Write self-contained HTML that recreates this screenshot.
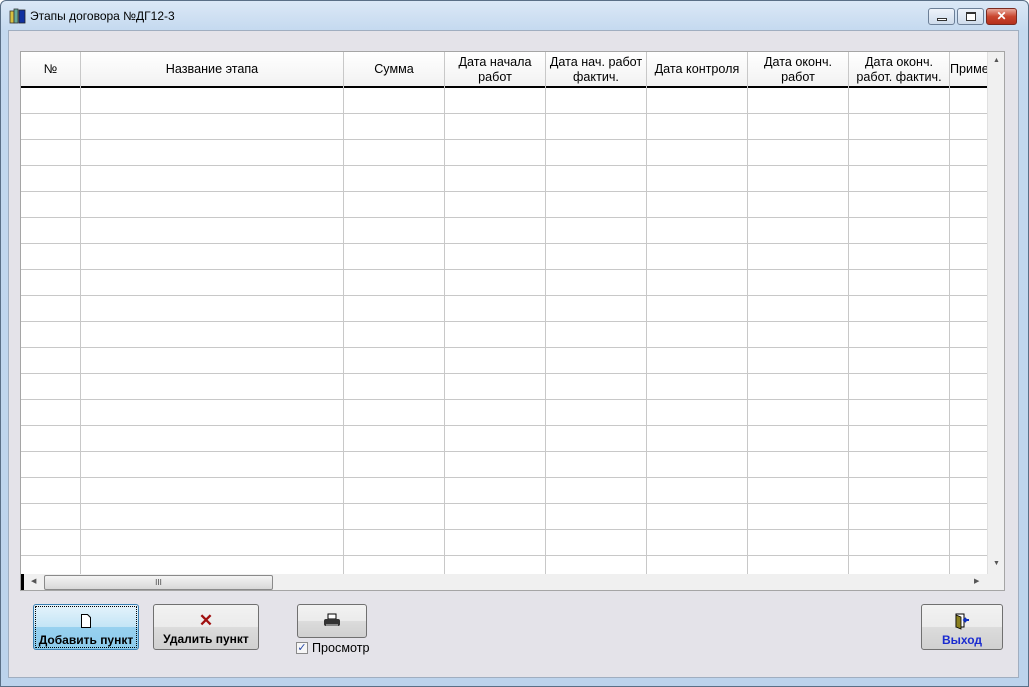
<!DOCTYPE html>
<html><head><meta charset="utf-8"><style>
*{margin:0;padding:0;box-sizing:border-box}
body{width:1029px;height:687px;overflow:hidden;font-family:"Liberation Sans",sans-serif;font-size:12px;background:#fff;position:relative}
.abs{position:absolute}
#frame{left:0;top:0;width:1029px;height:687px;background:linear-gradient(#dbe8f6,#c4d9ef 30px,#bcd3ec);border:1px solid #5a6f86;border-radius:6px 6px 0 0}
#client{left:8px;top:30px;width:1011px;height:648px;background:#e4e3e9;border:1px solid #a0aec0}
.title{left:30px;top:9px;font-size:12px;color:#000}
.wb{top:8px;height:17px;border:1px solid #6c7f97;border-radius:3px;background:linear-gradient(#eef3fa,#cfdcec)}
#grid{left:20px;top:51px;width:985px;height:540px;background:#fff;border:1px solid #a5a5a5;overflow:hidden}
.hdr{left:0;top:0;width:966px;height:36px;background:linear-gradient(#fff,#f2f2f2);border-bottom:2px solid #000}
.rows{left:0;top:36px;width:966px;height:486px;background:repeating-linear-gradient(#fff 0,#fff 25px,#c8c8c8 25px,#c8c8c8 26px)}
.col{top:0;width:1px;height:522px;background:#c8c8c8}
.h{top:0;height:35px;display:flex;align-items:center;justify-content:center;text-align:center;font-size:12.6px;line-height:15px;color:#000}
.vs{left:966px;top:0;width:18px;height:522px;background:#f0f0f0;border-left:1px solid #e0e0e0}
.hs{left:0;top:522px;width:984px;height:17px;background:#f0f0f0}
.btn{border:1px solid #707070;border-radius:3px;background:linear-gradient(#f2f2f2 0,#ebebeb 50%,#dcdcdc 50%,#d0d0d0);text-align:center;font-weight:bold;font-size:12px}
</style></head><body>
<div id="frame" class="abs"></div>
<svg class="abs" style="left:9px;top:7px" width="18" height="18" viewBox="0 0 18 18"><rect x="1" y="4" width="4" height="12" fill="#d8c040" stroke="#333" stroke-width=".8"/><rect x="5" y="2" width="4" height="14" fill="#6a9" stroke="#333" stroke-width=".8"/><rect x="10" y="3" width="6" height="13" fill="#1030a0" stroke="#222" stroke-width=".8"/></svg>
<div class="abs title">Этапы договора №ДГ12-3</div>
<div class="abs wb" style="left:928px;width:27px"><div style="position:absolute;left:8px;top:9px;width:10px;height:3px;border:1px solid #333;background:#fff"></div></div>
<div class="abs wb" style="left:957px;width:27px"><div style="position:absolute;left:8px;top:3px;width:10px;height:9px;border:1px solid #333;border-top-width:2px;background:#fff"></div></div>
<div class="abs wb" style="left:986px;width:31px;background:linear-gradient(#e9a899,#c9462f 50%,#b5301c);border-color:#7a2a20;color:#fff;font-weight:bold;font-size:12px;text-align:center;line-height:15px">✕</div>
<div id="client" class="abs"></div>
<div id="grid" class="abs">
 <div class="abs hdr"></div>
 <div class="abs rows"></div>
 <div class="abs col" style="left:59px"></div>
 <div class="abs col" style="left:322px"></div>
 <div class="abs col" style="left:423px"></div>
 <div class="abs col" style="left:524px"></div>
 <div class="abs col" style="left:625px"></div>
 <div class="abs col" style="left:726px"></div>
 <div class="abs col" style="left:827px"></div>
 <div class="abs col" style="left:928px"></div>
 <div class="abs h" style="left:0;width:59px">№</div>
 <div class="abs h" style="left:60px;width:262px">Название этапа</div>
 <div class="abs h" style="left:323px;width:100px">Сумма</div>
 <div class="abs h" style="left:424px;width:100px">Дата начала<br>работ</div>
 <div class="abs h" style="left:525px;width:100px">Дата нач. работ<br>фактич.</div>
 <div class="abs h" style="left:626px;width:100px">Дата контроля</div>
 <div class="abs h" style="left:727px;width:100px">Дата оконч.<br>работ</div>
 <div class="abs h" style="left:828px;width:100px">Дата оконч.<br>работ. фактич.</div>
 <div class="abs h" style="left:929px;width:37px;justify-content:flex-start;overflow:hidden;white-space:nowrap">Приме</div>
 <div class="abs vs"><div style="position:absolute;left:5px;top:5px;font-size:7px;color:#555">▲</div><div style="position:absolute;left:5px;top:508px;font-size:7px;color:#555">▼</div></div>
 <div class="abs hs"><div style="position:absolute;left:0;top:0;width:3px;height:17px;background:#000"></div><div style="position:absolute;left:10px;top:3px;font-size:7px;color:#555">◀</div><div style="position:absolute;left:23px;top:1px;width:229px;height:15px;border:1px solid #8a8a8a;border-radius:2px;background:linear-gradient(#f4f4f4,#d8d8d8);font-size:8px;text-align:center;line-height:13px;color:#444">III</div><div style="position:absolute;left:953px;top:3px;font-size:7px;color:#555">▶</div></div>
</div>
<div class="abs btn" style="left:33px;top:604px;width:106px;height:46px;border-color:#3c7fb1;background:linear-gradient(#e5f3fb 0,#c4e5f6 50%,#98d1ef 50%,#8ccbec);outline:1px dotted #000;outline-offset:-3px">
 <svg style="margin-top:9px" width="12" height="14" viewBox="0 0 12 14"><path d="M1.5 .5h6l3 3v10h-9z" fill="#fff" stroke="#000"/></svg>
 <div style="margin-top:2px">Добавить пункт</div></div>
<div class="abs btn" style="left:153px;top:604px;width:106px;height:46px">
 <div style="color:#a01010;font-size:17px;line-height:20px;margin-top:6px">✕</div>
 <div style="margin-top:1px">Удалить пункт</div></div>
<div class="abs btn" style="left:297px;top:604px;width:70px;height:34px">
 <svg style="margin-top:8px" width="18" height="16" viewBox="0 0 18 16"><rect x="5" y="1" width="8" height="5" fill="#fff" stroke="#000"/><rect x="1" y="6" width="16" height="7" rx="2" fill="#333"/><rect x="3" y="11" width="12" height="2" fill="#888"/></svg></div>
<div class="abs" style="left:296px;top:642px;width:12px;height:12px;border:1px solid #8a8a8a;background:#f6f6f6;font-size:11px;line-height:10px;color:#2a4aa8;text-align:center">✓</div>
<div class="abs" style="left:312px;top:641px;font-size:12.6px">Просмотр</div>
<div class="abs btn" style="left:921px;top:604px;width:82px;height:46px">
 <svg style="margin-top:7px" width="18" height="18" viewBox="0 0 18 18"><rect x="3" y="2" width="8" height="13" fill="#fff" stroke="#000"/><path d="M3 3l5 2v12l-5-2z" fill="#8a8020" stroke="#000" stroke-width=".8"/><path d="M11 8h5M13 6l-2 2 2 2" stroke="#1030c0" stroke-width="2" fill="none"/></svg>
 <div style="color:#1a2bd0">Выход</div></div>
</body></html>
